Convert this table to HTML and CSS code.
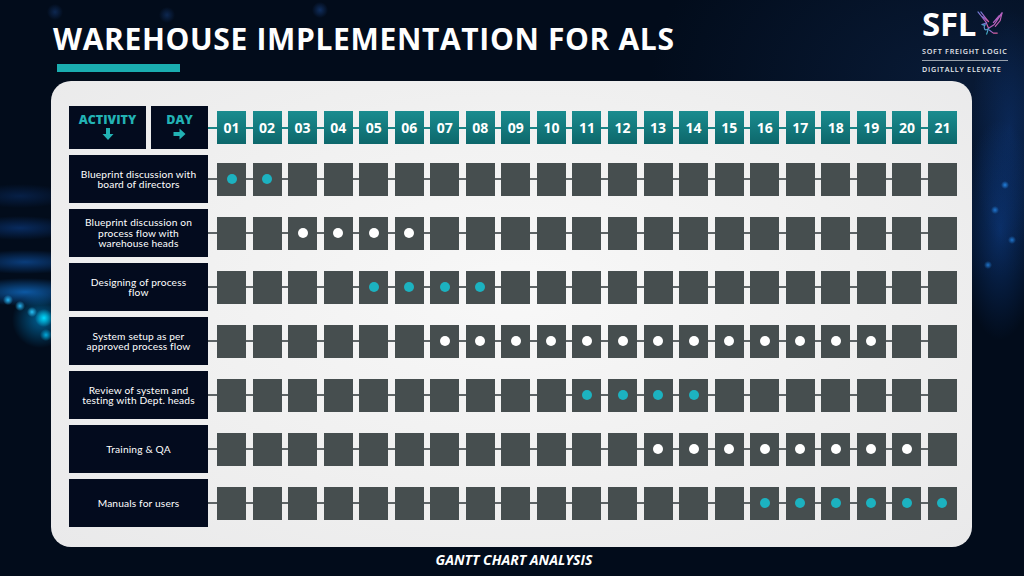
FILE: index.html
```html
<!DOCTYPE html>
<html lang="en">
<head>
<meta charset="utf-8">
<title>Warehouse Implementation for ALS</title>
<link rel="stylesheet" href="styles.css">
</head>
<body>
<div class="slide">
  <header class="top">
    <div class="title-block">
      <h1 class="title">WAREHOUSE IMPLEMENTATION FOR ALS</h1>
      <div class="underline"></div>
    </div>
    <div class="logo">
      <div class="logo-main">
        <span class="logo-sfl">SFL</span>
        <svg class="bird" viewBox="0 0 30 28" width="29" height="27">
          <defs>
            <linearGradient id="bg1" x1="0" y1="0" x2="1" y2="1">
              <stop offset="0" stop-color="#6c7dd8"/>
              <stop offset="0.5" stop-color="#b05fc0"/>
              <stop offset="1" stop-color="#e0609a"/>
            </linearGradient>
            <linearGradient id="bg2" x1="0" y1="0" x2="0" y2="1">
              <stop offset="0" stop-color="#7a6fd0"/>
              <stop offset="1" stop-color="#3fb6c8"/>
            </linearGradient>
          </defs>
          <g fill="none" stroke="url(#bg1)" stroke-width="1.2" stroke-linecap="round" stroke-linejoin="round">
            <path d="M2 3 L10 13 L13 20"/>
            <path d="M13 20 L19 16 L27 4 L25 12 L20 18"/>
            <path d="M27 4 L21 11"/>
            <path d="M24 7 L18 14"/>
            <path d="M5 3 L12 12"/>
            <path d="M7 8 L13 13"/>
            <path d="M14 22 L18 25 L22 25"/>
          </g>
          <g fill="none" stroke="url(#bg2)" stroke-width="1.2" stroke-linecap="round" stroke-linejoin="round">
            <path d="M11 14 C9 16 8 19 9 21 C10 22 12 21 13 20 L11 26"/>
            <path d="M9 15 L6 16 L9 17"/>
          </g>
        </svg>
      </div>
      <div class="logo-sub">SOFT FREIGHT LOGIC</div>
      <div class="logo-rule"></div>
      <div class="logo-sub">DIGITALLY ELEVATE</div>
    </div>
  </header>

  <main class="panel">
    <div class="row head-row">
      <div class="head-labels">
        <div class="hbox">
          <span>ACTIVITY</span>
          <svg viewBox="0 0 12 12" width="12" height="12"><path d="M4 0 H8 V6 H11.5 L6 12 L0.5 6 H4 Z" fill="#22b2b4"/></svg>
        </div>
        <div class="hbox day">
          <span>DAY</span>
          <svg viewBox="0 0 12 12" width="13" height="12"><path d="M0 4 H6 V0.5 L12 6 L6 11.5 V8 H0 Z" fill="#22b2b4"/></svg>
        </div>
      </div>
      <div class="cells head-cells" id="head"></div>
    </div>
    <div id="rows"></div>
  </main>

  <footer class="caption">GANTT CHART ANALYSIS</footer>
</div>
<script src="app.js"></script>
</body>
</html>
```

FILE: app.js
```js
(function () {
  var head = document.getElementById('head');
  for (var d = 1; d <= 21; d++) {
    var c = document.createElement('div');
    c.className = 'hcell';
    c.textContent = (d < 10 ? '0' : '') + d;
    head.appendChild(c);
  }
  var rows = [
    { label: 'Blueprint discussion with<br>board of directors', from: 1, to: 2, kind: 'teal' },
    { label: 'Blueprint discussion on<br>process flow with<br>warehouse heads', from: 3, to: 6, kind: 'white' },
    { label: 'Designing of process<br>flow', from: 5, to: 8, kind: 'teal' },
    { label: 'System setup as per<br>approved process flow', from: 7, to: 19, kind: 'white' },
    { label: 'Review of system and<br>testing with Dept. heads', from: 11, to: 14, kind: 'teal' },
    { label: 'Training &amp; QA', from: 13, to: 20, kind: 'white' },
    { label: 'Manuals for users', from: 16, to: 21, kind: 'teal' }
  ];
  var wrap = document.getElementById('rows');
  rows.forEach(function (r) {
    var row = document.createElement('div');
    row.className = 'row task-row';
    var lab = document.createElement('div');
    lab.className = 'label';
    lab.innerHTML = '<span>' + r.label + '</span>';
    row.appendChild(lab);
    var cells = document.createElement('div');
    cells.className = 'cells';
    for (var d = 1; d <= 21; d++) {
      var c = document.createElement('div');
      c.className = 'cell';
      if (d >= r.from && d <= r.to) {
        var dot = document.createElement('span');
        dot.className = 'dot ' + r.kind;
        c.appendChild(dot);
      }
      cells.appendChild(c);
    }
    row.appendChild(cells);
    wrap.appendChild(row);
  });
})();
```

FILE: styles.css
```css
* { box-sizing: border-box; }
html, body { margin: 0; padding: 0; }
body {
  width: 1024px;
  height: 576px;
  overflow: hidden;
  font-family: "Open Sans", "Liberation Sans", sans-serif;
  background-color: #020c1b;
  background-image:
    radial-gradient(circle 5px at 8px 300px, rgba(40,190,255,0.95), rgba(40,190,255,0) 100%),
    radial-gradient(circle 5px at 20px 306px, rgba(40,190,255,0.95), rgba(40,190,255,0) 100%),
    radial-gradient(circle 5px at 32px 312px, rgba(40,200,255,0.95), rgba(40,200,255,0) 100%),
    radial-gradient(circle 9px at 44px 318px, rgba(0,220,255,1), rgba(0,220,255,0) 100%),
    radial-gradient(circle 6px at 46px 335px, rgba(0,200,255,0.8), rgba(0,200,255,0) 100%),
    radial-gradient(ellipse 60px 14px at 25px 292px, rgba(20,140,255,0.6), rgba(20,140,255,0) 100%),
    radial-gradient(ellipse 60px 12px at 25px 262px, rgba(20,120,240,0.45), rgba(20,120,240,0) 100%),
    radial-gradient(ellipse 55px 12px at 20px 228px, rgba(20,100,220,0.35), rgba(20,100,220,0) 100%),
    radial-gradient(ellipse 50px 12px at 20px 196px, rgba(20,90,200,0.25), rgba(20,90,200,0) 100%),
    radial-gradient(circle 28px at 40px 320px, rgba(0,170,255,0.5), rgba(0,170,255,0) 100%),
    radial-gradient(circle 4px at 1005px 185px, rgba(40,150,255,0.8), rgba(40,150,255,0) 100%),
    radial-gradient(circle 4px at 995px 210px, rgba(40,150,255,0.7), rgba(40,150,255,0) 100%),
    radial-gradient(circle 4px at 1012px 240px, rgba(40,150,255,0.7), rgba(40,150,255,0) 100%),
    radial-gradient(circle 4px at 988px 265px, rgba(40,150,255,0.7), rgba(40,150,255,0) 100%),
    radial-gradient(ellipse 40px 110px at 1000px 230px, rgba(20,90,200,0.4), rgba(20,90,200,0) 100%),
    radial-gradient(ellipse 40px 120px at 1010px 130px, rgba(20,80,180,0.3), rgba(20,80,180,0) 100%),
    radial-gradient(circle 8px at 320px 10px, rgba(30,80,160,0.5), rgba(30,80,160,0) 100%),
    radial-gradient(circle 8px at 55px 12px, rgba(30,80,160,0.4), rgba(30,80,160,0) 100%),
    radial-gradient(circle 8px at 167px 15px, rgba(30,80,160,0.4), rgba(30,80,160,0) 100%),
    radial-gradient(ellipse 300px 200px at 950px 80px, rgba(15,40,80,0.5), rgba(15,40,80,0) 100%);
}
.slide { width: 1024px; height: 576px; display: flex; flex-direction: column; }

.top {
  height: 81px;
  display: flex;
  justify-content: space-between;
  align-items: flex-start;
  padding: 0 14px 0 53px;
}
.title-block { padding-top: 22px; }
.title {
  margin: 0;
  font-family: "Open Sans", sans-serif;
  font-weight: 700;
  font-size: 30px;
  line-height: 34px;
  color: #ffffff;
  letter-spacing: 0.65px;
}
.underline {
  margin: 8px 0 0 4px;
  width: 123px;
  height: 8px;
  background: #1aadb0;
}

.logo { padding-top: 9px; width: 88px; }
.logo-main { display: flex; align-items: center; height: 30px; }
.logo-sfl {
  font-family: "Open Sans", sans-serif;
  font-weight: 700;
  font-size: 33px;
  line-height: 30px;
  color: #ffffff;
  letter-spacing: -0.3px;
}
.bird { margin-left: 0; margin-top: -4px; }
.logo-sub {
  font-family: "Open Sans", sans-serif;
  font-weight: 600;
  font-size: 7.2px;
  line-height: 9px;
  letter-spacing: 0.75px;
  color: #e6e9ee;
  white-space: nowrap;
}
.logo-main + .logo-sub { margin-top: 8px; }
.logo-rule { height: 1px; background: #9aa2ad; margin: 4px 0 4px; width: 86px; }

.panel {
  margin-left: 51px;
  width: 921px;
  height: 466px;
  border-radius: 20px;
  background: radial-gradient(ellipse at 50% 45%, #f8f8f8 0%, #efefef 60%, #e9e9ea 100%);
  padding: 25px 0 0 18px;
  display: flex;
  flex-direction: column;
  gap: 6px;
}
#rows { display: flex; flex-direction: column; gap: 6px; }

.row { display: flex; align-items: center; }
.head-row { height: 43px; }
.task-row { height: 48px; }

.head-labels { display: flex; gap: 5px; width: 139px; height: 43px; }
.hbox {
  background: #030b1e;
  width: 77px;
  height: 43px;
  display: flex;
  flex-direction: column;
  align-items: center;
  justify-content: center;
  gap: 1px;
  color: #22b2b4;
  font-family: "Open Sans", sans-serif;
  font-weight: 800;
  font-size: 12.5px;
  line-height: 14px;
  padding-bottom: 3px;
}
.hbox.day { width: 57px; }

.label {
  width: 139px;
  height: 48px;
  background: #030b1e;
  color: #ffffff;
  display: flex;
  align-items: center;
  justify-content: center;
  text-align: center;
  font-family: "Lato", "Open Sans", sans-serif;
  font-weight: 400;
  font-size: 10.2px;
  line-height: 10.4px;
  letter-spacing: 0.15px;
}

.cells {
  width: 749px;
  height: 33px;
  padding-left: 9px;
  display: flex;
  gap: 6.55px;
  background: linear-gradient(#5e6466, #5e6466) left center / 100% 2px no-repeat;
}
.head-cells {
  background: linear-gradient(#1b8486, #1b8486) left center / 100% 2px no-repeat;
}
.hcell {
  width: 29px;
  height: 33px;
  background: linear-gradient(#1a8c8f, #0d676b);
  color: #ffffff;
  font-family: "Open Sans", sans-serif;
  font-weight: 700;
  font-size: 14px;
  display: flex;
  align-items: center;
  justify-content: center;
}
.cell {
  width: 29px;
  height: 33px;
  background: #464e4f;
  display: flex;
  align-items: center;
  justify-content: center;
}
.dot { width: 10px; height: 10px; border-radius: 50%; }
.dot.teal { background: #1cb2c0; }
.dot.white { background: #ffffff; }

.caption {
  text-align: center;
  color: #ffffff;
  font-family: "Open Sans", sans-serif;
  font-weight: 700;
  font-style: italic;
  font-size: 14px;
  line-height: 18px;
  padding-top: 4px;
  padding-left: 4px;
}
```
